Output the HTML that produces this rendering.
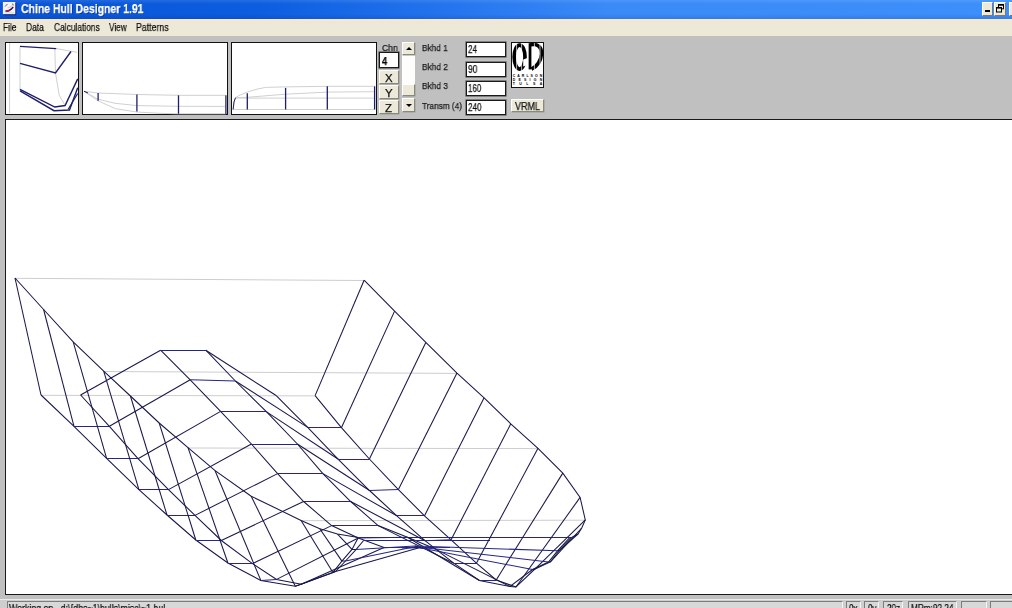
<!DOCTYPE html><html><head><meta charset="utf-8"><title>Chine Hull Designer 1.91</title><style>
html,body{margin:0;padding:0;}
body{width:1012px;height:608px;overflow:hidden;position:relative;background:#c0c0c0;font-family:"Liberation Sans",sans-serif;font-size:11px;color:#000;}
.abs{position:absolute;}
#title{left:0;top:0;width:1012px;height:19px;background:linear-gradient(90deg,#0a55d6 0%,#0c5ddf 25%,#2575ee 45%,#3a8af8 60%,#3d8ffb 100%);}
#title .shade{left:0;top:0;width:1012px;height:19px;background:linear-gradient(180deg,rgba(255,255,255,.10) 0,rgba(255,255,255,0) 4px,rgba(0,0,40,0) 14px,rgba(0,0,60,.12) 19px);}
#ttext{left:20px;top:1px;color:#fff;font-weight:bold;font-size:12.5px;line-height:16px;letter-spacing:.35px;white-space:nowrap;text-shadow:1px 1px 0 rgba(10,30,120,.55);}
#menu{left:0;top:19px;width:1012px;height:17px;background:linear-gradient(180deg,#f6e9d6 0,#f1e6d2 3px,#ece9d8 6px,#ece9d8 100%);}
#menu span{position:absolute;top:2px;line-height:13px;font-size:11px;white-space:nowrap;color:#111;}
.tb{background:#ece9d8;border:1px solid;border-color:#fff #7a7a72 #7a7a72 #fff;box-sizing:border-box;}
.box{background:#fff;border:1px solid #111;box-sizing:border-box;}
.inp{background:#fff;border:1px solid #1a1a1a;box-shadow:0 0 0 .6px #555;box-sizing:border-box;font-size:11px;line-height:12px;padding:2px 0 0 2px;}
.lbl{font-size:11px;line-height:12px;white-space:nowrap;color:#1a1a1a;}
.btn{background:#ece9d8;border:1px solid;border-color:#fff #8a887c #8a887c #fff;box-sizing:border-box;text-align:center;font-size:12px;line-height:11px;color:#111;box-shadow:.5px .5px 0 #9a9a92;}
#status{left:0;top:599px;width:1012px;height:9px;background:#cecece;border-top:1px solid #ececec;overflow:hidden;}
.sp{position:absolute;top:1px;height:12px;background:#d8d8d8;border:1px solid;border-color:#7c7c7c #f4f4f4 #f4f4f4 #7c7c7c;box-sizing:border-box;}
</style></head><body>
<div id="title" class="abs"><div class="shade abs"></div>
<svg class="abs" style="left:2px;top:1px" width="16" height="16" viewBox="0 0 16 16"><rect x="1.6" y="1.8" width="12.6" height="12.4" fill="#0a1a6a"/><rect x="0.9" y="1" width="12.4" height="12.2" fill="#f4f4f8"/><path d="M3.5 9.8 Q7 11 11.2 6" fill="none" stroke="#2a1a50" stroke-width="1.5"/><path d="M3.8 9.9 Q5.8 10.6 7.6 9.4" fill="none" stroke="#c81848" stroke-width="1.5"/><path d="M3 5.5 L5.5 3 M10 2.6 L11.8 4.2" fill="none" stroke="#55607a" stroke-width="1"/><path d="M5.5 7 Q8 6.5 10.8 4.6" fill="none" stroke="#e8c8c0" stroke-width="1.2"/><rect x="3" y="11" width="9" height="1.6" fill="#c8e4e4" opacity=".8"/></svg>
<div class="abs" style="left:20.50px;top:2.77px;font-size:12.5px;line-height:12.5px;white-space:nowrap;color:#fff;font-weight:bold;transform:scaleX(0.8358);transform-origin:0 0;will-change:transform;-webkit-text-stroke:.25px;text-shadow:1px 1px 0 rgba(10,30,120,.55);">Chine Hull Designer 1.91</div>
<div class="abs tb" style="left:982px;top:2px;width:11px;height:14px"></div>
<div class="abs" style="left:985px;top:10px;width:5px;height:2px;background:#000"></div>
<div class="abs tb" style="left:994px;top:2px;width:12px;height:14px"></div>
<svg class="abs" style="left:996px;top:4px" width="8" height="9" viewBox="0 0 8 9"><rect x="2.5" y="0.8" width="5" height="4" fill="none" stroke="#000" stroke-width="1"/><rect x="2" y="0" width="6" height="1.6" fill="#000"/><rect x="0.5" y="3.5" width="5" height="4.5" fill="#ece9d8" stroke="#000" stroke-width="1"/><rect x="0" y="3" width="6" height="1.6" fill="#000"/></svg>
<div class="abs tb" style="left:1009px;top:2px;width:6px;height:14px"></div>
</div>
<div id="menu" class="abs"></div>
<div class="abs" style="left:3.20px;top:22.34px;font-size:11px;line-height:11px;white-space:nowrap;color:#111;transform:scaleX(0.7566);transform-origin:0 0;will-change:transform;-webkit-text-stroke:.25px;">File</div>
<div class="abs" style="left:26.00px;top:22.34px;font-size:11px;line-height:11px;white-space:nowrap;color:#111;transform:scaleX(0.7694);transform-origin:0 0;will-change:transform;-webkit-text-stroke:.25px;">Data</div>
<div class="abs" style="left:53.80px;top:22.34px;font-size:11px;line-height:11px;white-space:nowrap;color:#111;transform:scaleX(0.7630);transform-origin:0 0;will-change:transform;-webkit-text-stroke:.25px;">Calculations</div>
<div class="abs" style="left:109.30px;top:22.34px;font-size:11px;line-height:11px;white-space:nowrap;color:#111;transform:scaleX(0.7484);transform-origin:0 0;will-change:transform;-webkit-text-stroke:.25px;">View</div>
<div class="abs" style="left:136.20px;top:22.34px;font-size:11px;line-height:11px;white-space:nowrap;color:#111;transform:scaleX(0.7956);transform-origin:0 0;will-change:transform;-webkit-text-stroke:.25px;">Patterns</div>
<div class="abs box" style="left:5px;top:42px;width:73.5px;height:73px"></div>
<div class="abs box" style="left:82px;top:42px;width:145.5px;height:73px"></div>
<div class="abs box" style="left:231px;top:42px;width:145.5px;height:73px"></div>
<div class="abs" style="left:381.80px;top:42.61px;font-size:9.5px;line-height:9.5px;white-space:nowrap;color:#1a1a1a;transform:scaleX(0.9064);transform-origin:0 0;will-change:transform;-webkit-text-stroke:.25px;">Chn</div>
<div class="abs inp" style="left:379px;top:52px;width:20px;height:16px"></div>
<div class="abs" style="left:381.60px;top:56.66px;font-size:10px;line-height:10px;white-space:nowrap;color:#000;font-weight:bold;transform:scaleX(0.9009);transform-origin:0 0;will-change:transform;-webkit-text-stroke:.25px;">4</div>
<div class="abs btn" style="left:379px;top:70px;width:20px;height:14px"></div>
<div class="abs btn" style="left:379px;top:85px;width:20px;height:14px"></div>
<div class="abs btn" style="left:379px;top:100px;width:20px;height:14px"></div>
<div class="abs" style="left:385.10px;top:73.10px;font-size:10.5px;line-height:10.5px;white-space:nowrap;color:#111;transform:scaleX(1.0884);transform-origin:0 0;will-change:transform;-webkit-text-stroke:.25px;">X</div>
<div class="abs" style="left:385.10px;top:88.30px;font-size:10.5px;line-height:10.5px;white-space:nowrap;color:#111;transform:scaleX(1.0884);transform-origin:0 0;will-change:transform;-webkit-text-stroke:.25px;">Y</div>
<div class="abs" style="left:385.40px;top:103.20px;font-size:10.5px;line-height:10.5px;white-space:nowrap;color:#111;transform:scaleX(1.0929);transform-origin:0 0;will-change:transform;-webkit-text-stroke:.25px;">Z</div>
<div class="abs" style="left:402px;top:54px;width:13px;height:30px;background:#fdfdfb"></div>
<div class="abs btn" style="left:402px;top:42px;width:13px;height:13px"></div>
<div class="abs" style="left:406px;top:47px;width:0;height:0;border-left:3px solid transparent;border-right:3px solid transparent;border-bottom:3px solid #000"></div>
<div class="abs btn" style="left:402px;top:84px;width:13px;height:12px"></div>
<div class="abs btn" style="left:402px;top:98px;width:13px;height:14px"></div>
<div class="abs" style="left:406px;top:104px;width:0;height:0;border-left:3px solid transparent;border-right:3px solid transparent;border-top:3px solid #000"></div>
<div class="abs" style="left:421.90px;top:43.31px;font-size:9.5px;line-height:9.5px;white-space:nowrap;color:#1a1a1a;transform:scaleX(0.8718);transform-origin:0 0;will-change:transform;-webkit-text-stroke:.25px;">Bkhd 1</div>
<div class="abs" style="left:421.90px;top:62.11px;font-size:9.5px;line-height:9.5px;white-space:nowrap;color:#1a1a1a;transform:scaleX(0.8786);transform-origin:0 0;will-change:transform;-webkit-text-stroke:.25px;">Bkhd 2</div>
<div class="abs" style="left:421.90px;top:81.41px;font-size:9.5px;line-height:9.5px;white-space:nowrap;color:#1a1a1a;transform:scaleX(0.8786);transform-origin:0 0;will-change:transform;-webkit-text-stroke:.25px;">Bkhd 3</div>
<div class="abs" style="left:421.90px;top:100.51px;font-size:9.5px;line-height:9.5px;white-space:nowrap;color:#1a1a1a;transform:scaleX(0.8660);transform-origin:0 0;will-change:transform;-webkit-text-stroke:.25px;">Transm (4)</div>
<div class="abs inp" style="left:466px;top:42px;width:40px;height:15px"></div>
<div class="abs" style="left:468.30px;top:45.06px;font-size:10px;line-height:10px;white-space:nowrap;color:#111;transform:scaleX(0.8198);transform-origin:0 0;will-change:transform;-webkit-text-stroke:.25px;">24</div>
<div class="abs inp" style="left:466px;top:61.5px;width:40px;height:15px"></div>
<div class="abs" style="left:468.30px;top:64.56px;font-size:10px;line-height:10px;white-space:nowrap;color:#111;transform:scaleX(0.8468);transform-origin:0 0;will-change:transform;-webkit-text-stroke:.25px;">90</div>
<div class="abs inp" style="left:466px;top:80.5px;width:40px;height:15px"></div>
<div class="abs" style="left:468.30px;top:83.56px;font-size:10px;line-height:10px;white-space:nowrap;color:#111;transform:scaleX(0.7964);transform-origin:0 0;will-change:transform;-webkit-text-stroke:.25px;">160</div>
<div class="abs inp" style="left:466px;top:100px;width:40px;height:15px"></div>
<div class="abs" style="left:468.30px;top:103.06px;font-size:10px;line-height:10px;white-space:nowrap;color:#111;transform:scaleX(0.8204);transform-origin:0 0;will-change:transform;-webkit-text-stroke:.25px;">240</div>
<svg class="abs" style="left:511px;top:42px" width="33" height="46" viewBox="0 0 33 46"><rect x="0.5" y="0.5" width="32" height="45" fill="#fff" stroke="#111"/><ellipse cx="8.6" cy="15.1" rx="5.4" ry="12" fill="none" stroke="#000" stroke-width="3.7"/><path d="M12.2 17.5 L16.5 16 L16.5 23 L12.2 24.5 Z" fill="#fff"/><path d="M18.8 1.2 V27.4" stroke="#000" stroke-width="3.2" fill="none"/><path d="M19.5 2.8 C27 1.6 31 5 30.4 12.5 C29.8 19 25.5 24.5 20.5 27.2" fill="none" stroke="#000" stroke-width="3.6"/><path d="M10.6 1 V29 M17.3 1 V29 M23.4 1 V29 M29 1 V31 M5.6 2 V29" stroke="#fff" stroke-width=".7" fill="none"/><text x="16.5" y="35.4" font-family="Liberation Sans, sans-serif" font-weight="bold" font-size="3.5" text-anchor="middle" textLength="29.5" fill="#000">CARLSON</text><text x="16.5" y="39.4" font-family="Liberation Sans, sans-serif" font-weight="bold" font-size="3.5" text-anchor="middle" textLength="29.5" fill="#000">DESIGN</text><text x="16.5" y="43.4" font-family="Liberation Sans, sans-serif" font-weight="bold" font-size="3.5" text-anchor="middle" textLength="29.5" fill="#000">TULSA</text></svg>
<div class="abs btn" style="left:511px;top:99px;width:33px;height:13px"></div>
<div class="abs" style="left:515.40px;top:101.66px;font-size:10px;line-height:10px;white-space:nowrap;color:#111;transform:scaleX(0.8957);transform-origin:0 0;will-change:transform;-webkit-text-stroke:.25px;">VRML</div>
<div class="abs" style="left:5px;top:119px;width:1010px;height:476px;background:#fff;border:1px solid #1a1a1a;box-sizing:border-box"></div>
<svg class="abs" style="left:0;top:0" width="1012" height="608" viewBox="0 0 1012 608">
<g fill="none" stroke-width="1">
<line x1="9.6" y1="43" x2="9.6" y2="113" stroke="#d0d0d0"/>
<polyline points="20,46.4 20,90.8" stroke="#d0d0d0"/>
<polyline points="54.8,48.6 55.5,73 59.2,95.2 65.1,105.5" stroke="#d0d0d0"/>
<polyline points="56.2,48.6 77,52.3" stroke="#d0d0d0"/>
<polyline points="20,46.4 56.2,48.6" stroke="#1e1e6c" stroke-width="1.4"/>
<polyline points="20,63.4 55.5,73 71,51.5" stroke="#1e1e6c" stroke-width="1.4"/>
<polyline points="20,89.3 54.8,107 65.1,105.5 77.7,78.9" stroke="#1e1e6c" stroke-width="1.4"/>
<polyline points="20,90.8 54,110.7 69.5,110 77.7,87.8" stroke="#1e1e6c" stroke-width="1.4"/>
<polyline points="68,109.5 77.7,93.5" stroke="#1e1e6c" stroke-width="1.2"/>
<polyline points="84,91.3 98,93 137,94.5 178.5,95.3 225.4,95.3" stroke="#d0d0d0"/>
<polyline points="84,91.3 98,99.2 115,103.3 137,105.6 178.5,106.3 225,106.4" stroke="#d0d0d0"/>
<polyline points="84,91.3 98,100.8 115.5,108.7 137,112 160,113.3 178.8,113.8 226,113.8" stroke="#d0d0d0"/>
<line x1="84" y1="91.3" x2="88" y2="93" stroke="#1e1e6c"/>
<line x1="98.1" y1="92.9" x2="98.1" y2="100.8" stroke="#1e1e6c" stroke-width="1.3"/>
<line x1="136.9" y1="94.5" x2="136.9" y2="111.6" stroke="#1e1e6c" stroke-width="1.3"/>
<line x1="178.5" y1="95.3" x2="178.5" y2="113.8" stroke="#1e1e6c" stroke-width="1.3"/>
<line x1="225.9" y1="95.3" x2="225.9" y2="114" stroke="#1e1e6c" stroke-width="1.3"/>
<line x1="233" y1="109.5" x2="375" y2="109.5" stroke="#d0d0d0"/>
<polyline points="233.1,109.5 234,102 235.5,97.7 240,95 247.3,92.1 256,89.4 265.5,87.4 285.3,86.9 327.2,86.3 374.6,86.3" stroke="#d0d0d0"/>
<polyline points="235.5,97.7 247.3,97.3 285.3,94.2 327.2,92.1 374.6,91.7" stroke="#d0d0d0"/>
<line x1="235.5" y1="98.1" x2="375" y2="98.1" stroke="#d0d0d0"/>
<polyline points="233.1,109.5 234,102 235.5,97.7" stroke="#1e1e6c" stroke-width="1"/>
<line x1="247.3" y1="93.2" x2="247.3" y2="109.5" stroke="#1e1e6c" stroke-width="1.3"/>
<line x1="285.6" y1="87.9" x2="285.6" y2="109.5" stroke="#1e1e6c" stroke-width="1.3"/>
<line x1="327.3" y1="86.3" x2="327.3" y2="109.5" stroke="#1e1e6c" stroke-width="1.3"/>
<line x1="374.6" y1="86.3" x2="374.6" y2="109.5" stroke="#1e1e6c" stroke-width="1.3"/>
</g>
<g fill="none">
<line x1="15.0" y1="278.3" x2="364.1" y2="280.5" stroke="#cdcdcd" stroke-width="1"/>
<line x1="41.0" y1="395.3" x2="315.1" y2="395.9" stroke="#cdcdcd" stroke-width="1"/>
<line x1="103.7" y1="371.5" x2="457.0" y2="373.4" stroke="#cdcdcd" stroke-width="1"/>
<line x1="188.0" y1="448.0" x2="538.0" y2="448.6" stroke="#cdcdcd" stroke-width="1"/>
<line x1="301.1" y1="520.7" x2="585.3" y2="520.2" stroke="#cdcdcd" stroke-width="1"/>
<polyline points="15.0,278.0 43.6,309.5 73.2,341.9 103.7,371.2 130.4,396.0 159.2,423.0 188.0,447.7 215.1,470.7 251.2,496.2 301.1,520.4 319.8,528.7 337.5,534.1 358.3,537.6" fill="none" stroke="#18184a" stroke-width="1.05"/>
<polyline points="41.0,395.0 74.0,426.3 106.6,458.4 138.9,489.6 167.0,515.0 195.8,540.0 227.9,563.0 260.8,580.4 295.3,586.3 332.9,572.5 341.9,561.1 352.0,549.4 358.3,537.6" fill="none" stroke="#18184a" stroke-width="1.05"/>
<polyline points="80.6,395.0 109.4,426.3 138.0,458.7 168.5,489.6 195.0,515.4 221.3,540.5 252.5,563.6 276.6,579.4 301.3,584.3 335.5,571.5 345.5,561.0 356.0,549.6 363.6,540.5" fill="none" stroke="#18184a" stroke-width="1.05"/>
<polyline points="160.6,350.2 190.2,379.8 220.6,411.4 251.4,444.0 277.6,473.6 303.6,501.5 331.6,525.6 358.3,538.0 384.0,547.4 420.0,547.5 416.0,546.5 415.0,546.0" fill="none" stroke="#18184a" stroke-width="1.05"/>
<polyline points="205.8,350.2 235.4,381.0 266.6,411.9 297.4,444.0 322.9,473.6 350.7,501.5 378.1,525.6 407.5,537.2 432.0,547.4 421.0,548.0 418.0,547.0 415.5,546.0" fill="none" stroke="#18184a" stroke-width="1.05"/>
<polyline points="276.5,395.8 307.7,427.4 338.3,459.3 369.5,490.5 396.8,515.8 425.0,540.7 453.7,563.2 479.4,580.5 510.0,586.5 532.5,569.5 548.5,562.0 557.5,550.8 570.0,537.3" fill="none" stroke="#18184a" stroke-width="1.05"/>
<polyline points="315.1,395.6 341.4,427.7 369.4,459.0 398.4,489.6 424.5,515.8 451.1,539.8 476.4,563.2 496.2,580.0 516.0,587.0 534.6,569.3 550.4,561.9 559.3,550.5 572.1,537.2" fill="none" stroke="#18184a" stroke-width="1.05"/>
<polyline points="364.1,280.2 394.6,311.1 425.8,342.4 457.0,373.1 484.1,397.8 510.8,423.8 538.0,448.3 562.8,473.1 580.1,497.4 585.3,519.9 581.7,528.0 578.0,534.0 572.1,537.2" fill="none" stroke="#18184a" stroke-width="1.05"/>
<line x1="363.6" y1="540.5" x2="490" y2="540.5" stroke="#262688" stroke-width="1.05"/>
<line x1="358.3" y1="537.5" x2="572.1" y2="537.5" stroke="#262688" stroke-width="1.05"/>
<line x1="402" y1="548" x2="450" y2="547.6" stroke="#262688" stroke-width="1.05"/>
<line x1="15.0" y1="278.0" x2="41.0" y2="395.0" stroke="#18184a" stroke-width="1.05"/>
<line x1="80.6" y1="395.0" x2="160.6" y2="350.2" stroke="#18184a" stroke-width="1.05"/>
<line x1="160.6" y1="350.5" x2="205.8" y2="350.5" stroke="#262688" stroke-width="1.05"/>
<line x1="205.8" y1="350.2" x2="276.5" y2="395.8" stroke="#18184a" stroke-width="1.05"/>
<line x1="315.1" y1="395.6" x2="364.1" y2="280.2" stroke="#18184a" stroke-width="1.05"/>
<line x1="43.6" y1="309.5" x2="74.0" y2="426.3" stroke="#18184a" stroke-width="1.05"/>
<line x1="74.0" y1="426.5" x2="109.4" y2="426.5" stroke="#262688" stroke-width="1.05"/>
<line x1="109.4" y1="426.3" x2="190.2" y2="379.8" stroke="#18184a" stroke-width="1.05"/>
<line x1="190.2" y1="379.8" x2="235.4" y2="381.0" stroke="#262688" stroke-width="1.05"/>
<line x1="235.4" y1="381.0" x2="307.7" y2="427.4" stroke="#18184a" stroke-width="1.05"/>
<line x1="307.7" y1="427.5" x2="341.4" y2="427.5" stroke="#262688" stroke-width="1.05"/>
<line x1="341.4" y1="427.7" x2="394.6" y2="311.1" stroke="#18184a" stroke-width="1.05"/>
<line x1="73.2" y1="341.9" x2="106.6" y2="458.4" stroke="#18184a" stroke-width="1.05"/>
<line x1="106.6" y1="458.5" x2="138.0" y2="458.5" stroke="#262688" stroke-width="1.05"/>
<line x1="138.0" y1="458.7" x2="220.6" y2="411.4" stroke="#18184a" stroke-width="1.05"/>
<line x1="220.6" y1="411.5" x2="266.6" y2="411.5" stroke="#262688" stroke-width="1.05"/>
<line x1="266.6" y1="411.9" x2="338.3" y2="459.3" stroke="#18184a" stroke-width="1.05"/>
<line x1="338.3" y1="459.5" x2="369.4" y2="459.5" stroke="#262688" stroke-width="1.05"/>
<line x1="369.4" y1="459.0" x2="425.8" y2="342.4" stroke="#18184a" stroke-width="1.05"/>
<line x1="103.7" y1="371.2" x2="138.9" y2="489.6" stroke="#18184a" stroke-width="1.05"/>
<line x1="138.9" y1="489.5" x2="168.5" y2="489.5" stroke="#262688" stroke-width="1.05"/>
<line x1="168.5" y1="489.6" x2="251.4" y2="444.0" stroke="#18184a" stroke-width="1.05"/>
<line x1="251.4" y1="444.5" x2="297.4" y2="444.5" stroke="#262688" stroke-width="1.05"/>
<line x1="297.4" y1="444.0" x2="369.5" y2="490.5" stroke="#18184a" stroke-width="1.05"/>
<line x1="369.5" y1="490.5" x2="398.4" y2="489.6" stroke="#262688" stroke-width="1.05"/>
<line x1="398.4" y1="489.6" x2="457.0" y2="373.1" stroke="#18184a" stroke-width="1.05"/>
<line x1="130.4" y1="396.0" x2="167.0" y2="515.0" stroke="#18184a" stroke-width="1.05"/>
<line x1="167.0" y1="515.5" x2="195.0" y2="515.5" stroke="#262688" stroke-width="1.05"/>
<line x1="195.0" y1="515.4" x2="277.6" y2="473.6" stroke="#18184a" stroke-width="1.05"/>
<line x1="277.6" y1="473.5" x2="322.9" y2="473.5" stroke="#262688" stroke-width="1.05"/>
<line x1="322.9" y1="473.6" x2="396.8" y2="515.8" stroke="#18184a" stroke-width="1.05"/>
<line x1="396.8" y1="515.5" x2="424.5" y2="515.5" stroke="#262688" stroke-width="1.05"/>
<line x1="424.5" y1="515.8" x2="484.1" y2="397.8" stroke="#18184a" stroke-width="1.05"/>
<line x1="159.2" y1="423.0" x2="195.8" y2="540.0" stroke="#18184a" stroke-width="1.05"/>
<line x1="195.8" y1="540.5" x2="221.3" y2="540.5" stroke="#262688" stroke-width="1.05"/>
<line x1="221.3" y1="540.5" x2="303.6" y2="501.5" stroke="#18184a" stroke-width="1.05"/>
<line x1="303.6" y1="501.5" x2="350.7" y2="501.5" stroke="#262688" stroke-width="1.05"/>
<line x1="350.7" y1="501.5" x2="425.0" y2="540.7" stroke="#18184a" stroke-width="1.05"/>
<line x1="425.0" y1="540.7" x2="451.1" y2="539.8" stroke="#262688" stroke-width="1.05"/>
<line x1="451.1" y1="539.8" x2="510.8" y2="423.8" stroke="#18184a" stroke-width="1.05"/>
<line x1="188.0" y1="447.7" x2="227.9" y2="563.0" stroke="#18184a" stroke-width="1.05"/>
<line x1="227.9" y1="563.5" x2="252.5" y2="563.5" stroke="#262688" stroke-width="1.05"/>
<line x1="252.5" y1="563.6" x2="331.6" y2="525.6" stroke="#18184a" stroke-width="1.05"/>
<line x1="331.6" y1="525.5" x2="378.1" y2="525.5" stroke="#262688" stroke-width="1.05"/>
<line x1="378.1" y1="525.6" x2="453.7" y2="563.2" stroke="#18184a" stroke-width="1.05"/>
<line x1="453.7" y1="563.5" x2="476.4" y2="563.5" stroke="#262688" stroke-width="1.05"/>
<line x1="476.4" y1="563.2" x2="538.0" y2="448.3" stroke="#18184a" stroke-width="1.05"/>
<line x1="215.1" y1="470.7" x2="260.8" y2="580.4" stroke="#18184a" stroke-width="1.05"/>
<line x1="260.8" y1="580.4" x2="276.6" y2="579.4" stroke="#262688" stroke-width="1.05"/>
<line x1="276.6" y1="579.4" x2="358.3" y2="538.0" stroke="#18184a" stroke-width="1.05"/>
<line x1="358.3" y1="538.0" x2="407.5" y2="537.2" stroke="#262688" stroke-width="1.05"/>
<line x1="407.5" y1="537.2" x2="479.4" y2="580.5" stroke="#18184a" stroke-width="1.05"/>
<line x1="479.4" y1="580.5" x2="496.2" y2="580.5" stroke="#262688" stroke-width="1.05"/>
<line x1="496.2" y1="580.0" x2="562.8" y2="473.1" stroke="#18184a" stroke-width="1.05"/>
<line x1="251.2" y1="496.2" x2="295.3" y2="586.3" stroke="#18184a" stroke-width="1.05"/>
<line x1="295.3" y1="586.3" x2="301.3" y2="584.3" stroke="#18184a" stroke-width="1.05"/>
<line x1="301.3" y1="584.3" x2="384.0" y2="547.4" stroke="#18184a" stroke-width="1.05"/>
<line x1="384.0" y1="547.5" x2="432.0" y2="547.5" stroke="#262688" stroke-width="1.05"/>
<line x1="432.0" y1="547.4" x2="510.0" y2="586.5" stroke="#18184a" stroke-width="1.05"/>
<line x1="510.0" y1="586.5" x2="516.0" y2="587.0" stroke="#18184a" stroke-width="1.05"/>
<line x1="516.0" y1="587.0" x2="580.1" y2="497.4" stroke="#18184a" stroke-width="1.05"/>
<line x1="301.1" y1="520.4" x2="332.9" y2="572.5" stroke="#18184a" stroke-width="1.05"/>
<line x1="332.9" y1="572.5" x2="335.5" y2="571.5" stroke="#18184a" stroke-width="1.05"/>
<line x1="335.5" y1="571.5" x2="420.0" y2="547.5" stroke="#18184a" stroke-width="1.05"/>
<line x1="420.0" y1="547.5" x2="421.0" y2="548.0" stroke="#18184a" stroke-width="1.05"/>
<line x1="421.0" y1="548.0" x2="532.5" y2="569.5" stroke="#262688" stroke-width="1.05"/>
<line x1="532.5" y1="569.5" x2="534.6" y2="569.3" stroke="#18184a" stroke-width="1.05"/>
<line x1="534.6" y1="569.3" x2="585.3" y2="519.9" stroke="#18184a" stroke-width="1.05"/>
<line x1="319.8" y1="528.7" x2="341.9" y2="561.1" stroke="#18184a" stroke-width="1.05"/>
<line x1="341.9" y1="561.1" x2="345.5" y2="561.0" stroke="#18184a" stroke-width="1.05"/>
<line x1="345.5" y1="561.0" x2="416.0" y2="546.5" stroke="#262688" stroke-width="1.05"/>
<line x1="416.0" y1="546.5" x2="418.0" y2="547.0" stroke="#18184a" stroke-width="1.05"/>
<line x1="418.0" y1="547.0" x2="548.5" y2="562.0" stroke="#262688" stroke-width="1.05"/>
<line x1="548.5" y1="562.0" x2="550.4" y2="561.9" stroke="#18184a" stroke-width="1.05"/>
<line x1="550.4" y1="561.9" x2="581.7" y2="528.0" stroke="#18184a" stroke-width="1.05"/>
<line x1="337.5" y1="534.1" x2="352.0" y2="549.4" stroke="#18184a" stroke-width="1.05"/>
<line x1="352.0" y1="549.4" x2="356.0" y2="549.6" stroke="#18184a" stroke-width="1.05"/>
<line x1="356.0" y1="549.6" x2="415.0" y2="546.0" stroke="#262688" stroke-width="1.05"/>
<line x1="415.0" y1="546.0" x2="415.5" y2="546.0" stroke="#18184a" stroke-width="1.05"/>
<line x1="415.5" y1="546.0" x2="557.5" y2="550.8" stroke="#262688" stroke-width="1.05"/>
<line x1="557.5" y1="550.8" x2="559.3" y2="550.5" stroke="#18184a" stroke-width="1.05"/>
<line x1="559.3" y1="550.5" x2="578.0" y2="534.0" stroke="#18184a" stroke-width="1.05"/>
</g></svg>
<div id="status" class="abs">
<div class="sp" style="left:7px;width:836px"></div>
<div class="sp" style="left:846px;width:15px"></div>
<div class="sp" style="left:864px;width:15px"></div>
<div class="sp" style="left:883px;width:20px"></div>
<div class="sp" style="left:908px;width:49px"></div>
<div class="sp" style="left:961px;width:26px"></div>
<div class="sp" style="left:990px;width:24px"></div>
</div>
<div class="abs" style="left:9.30px;top:602.50px;font-size:10.5px;line-height:10.5px;white-space:nowrap;color:#111;transform:scaleX(0.8372);transform-origin:0 0;will-change:transform;-webkit-text-stroke:.25px;">Working on.. d:\{dhs~1\hulls\misc\~1.hul</div>
<div class="abs" style="left:849.30px;top:602.50px;font-size:10.5px;line-height:10.5px;white-space:nowrap;color:#111;transform:scaleX(0.7673);transform-origin:0 0;will-change:transform;-webkit-text-stroke:.25px;">0x</div>
<div class="abs" style="left:868.00px;top:602.50px;font-size:10.5px;line-height:10.5px;white-space:nowrap;color:#111;transform:scaleX(0.7673);transform-origin:0 0;will-change:transform;-webkit-text-stroke:.25px;">0y</div>
<div class="abs" style="left:887.20px;top:602.50px;font-size:10.5px;line-height:10.5px;white-space:nowrap;color:#111;transform:scaleX(0.7749);transform-origin:0 0;will-change:transform;-webkit-text-stroke:.25px;">20z</div>
<div class="abs" style="left:911.40px;top:602.50px;font-size:10.5px;line-height:10.5px;white-space:nowrap;color:#111;transform:scaleX(0.7829);transform-origin:0 0;will-change:transform;-webkit-text-stroke:.25px;">MRm:92.24</div>
</body></html>
